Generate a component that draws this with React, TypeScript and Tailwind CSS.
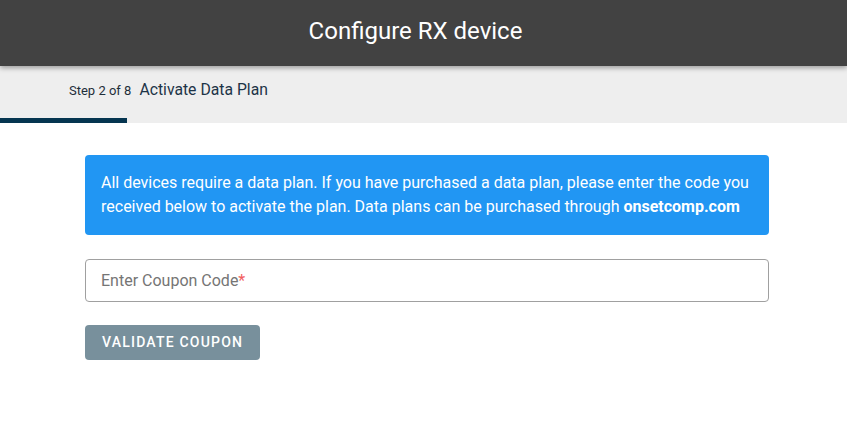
import React, { useState } from "react";

export default function App() {
  const [code, setCode] = useState("");

  return (
    <div className="min-h-screen bg-white font-['Roboto',sans-serif]" id="configure-rx-page">
      {/* Top title bar */}
      <header className="relative z-10 h-[66px] bg-[#424242] flex items-center justify-center pr-[16px] shadow-[0_2px_5px_rgba(0,0,0,0.35)]">
        <h1 className="text-white text-[24px] leading-none -mt-[4px]">Configure RX device</h1>
      </header>

      {/* Stepper */}
      <div className="h-[57px] bg-[#eeeeee] flex flex-col justify-between">
        <div className="flex items-baseline pl-[69px] pt-[12px] text-[#1f2e3a]">
          <span className="text-[13px]">Step 2 of 8</span>
          <span className="ml-[8px] text-[15.75px] text-[#1d3447]">Activate Data Plan</span>
        </div>
        <div className="h-[5px] w-[127px] bg-[#053550]" />
      </div>

      {/* Content */}
      <div className="px-[85px] pt-[32px] w-[854px]">
        <div className="bg-[#2196f3] rounded-[4px] px-4 py-4 text-white text-[16px] leading-[24px]">
          All devices require a data plan. If you have purchased a data plan, please enter the code you
          received below to activate the plan. Data plans can be purchased through{" "}
          <span className="font-bold">onsetcomp.com</span>
        </div>

        <div className="relative mt-[24px]">
          <input
            value={code}
            onChange={(e) => setCode(e.target.value)}
            className="w-full h-[43px] border border-[#a0a0a0] rounded-[4px] px-4 text-[16px] text-[#212121] outline-none"
            id="coupon-code-input"
          />
          {!code && (
            <span className="absolute left-4 top-1/2 -translate-y-1/2 pointer-events-none text-[16px] text-[#757575]">
              Enter Coupon Code<span className="text-[#f26060]">*</span>
            </span>
          )}
        </div>

        <button
          className="mt-[23px] h-[35px] px-[17px] rounded-[4px] bg-[#78909c] text-white text-[14px] font-medium tracking-[1.2px] uppercase"
          id="validate-coupon-btn"
        >
          Validate Coupon
        </button>
      </div>
    </div>
  );
}
